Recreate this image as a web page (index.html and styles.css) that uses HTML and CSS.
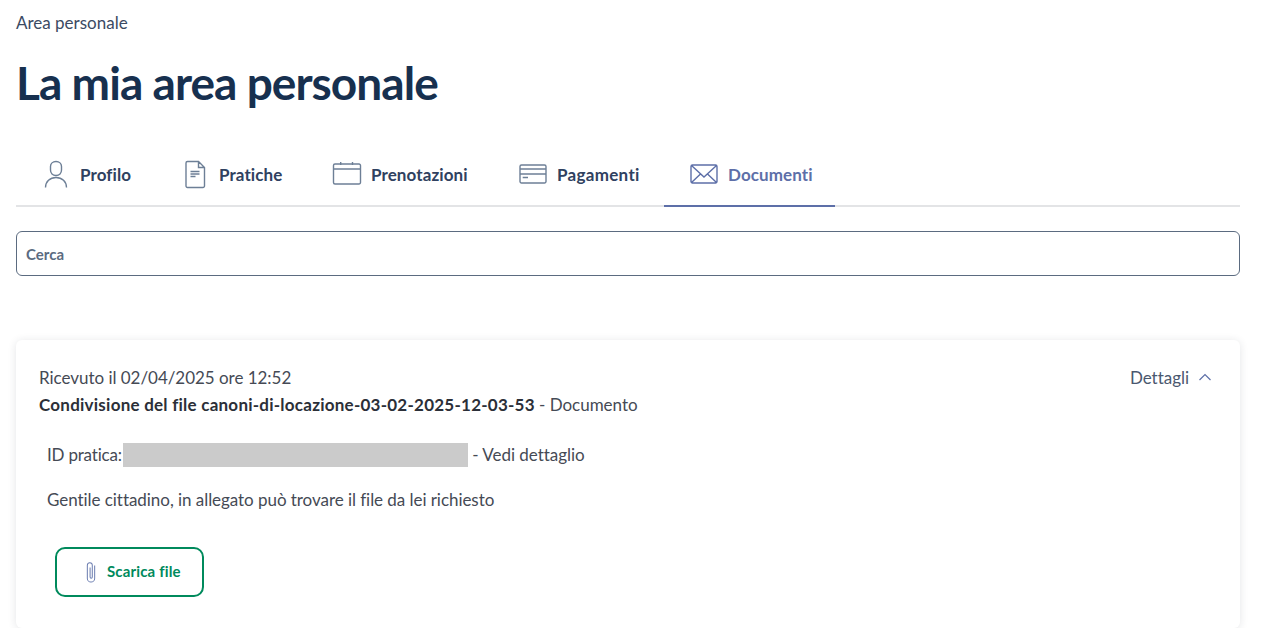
FILE: index.html
```html
<!DOCTYPE html>
<html lang="it">
<head>
<meta charset="utf-8">
<title>La mia area personale</title>
<link rel="stylesheet" href="styles.css">
</head>
<body>
<main class="page">
  <nav class="crumb">Area personale</nav>
  <h1 class="title">La mia area personale</h1>
  <ul class="tabs">
    <li class="tab"><svg class="ico" viewBox="0 0 32 32"><path d="M16 3.500c-3.300 0-5.500 2.200-5.500 5v3.500c0 3.200 2.200 5.500 5.500 5.500s5.500-2.300 5.500-5.500V8.500c0-2.800-2.200-5-5.500-5zM5.500 29.500c0-6 4.500-10 10.500-10s10.500 4 10.500 10"/></svg><span class="tab-t t1">Profilo</span></li>
    <li class="tab"><svg class="ico" viewBox="0 0 32 32"><path d="M8.500 3.500h11l6 6v18.500a1.500 1.500 0 0 1-1.500 1.500H8.500A1.500 1.500 0 0 1 7 28V5a1.500 1.500 0 0 1 1.500-1.500zM19.500 4v5.500H25M11.500 13.500h9M11.500 16h9M11.500 18.500h5"/></svg><span class="tab-t t2">Pratiche</span></li>
    <li class="tab"><svg class="ico" viewBox="0 0 32 32"><path d="M4 6h24a1.500 1.500 0 0 1 1.500 1.500v17a1.500 1.500 0 0 1-1.500 1.500H4a1.500 1.500 0 0 1-1.500-1.500v-17A1.500 1.500 0 0 1 4 6zM3 11h26M9.700 4v3M21.500 4v3"/></svg><span class="tab-t t3">Prenotazioni</span></li>
    <li class="tab"><svg class="ico" viewBox="0 0 32 32"><path d="M4.500 7h23a1.500 1.500 0 0 1 1.500 1.500v15a1.500 1.500 0 0 1-1.500 1.500h-23A1.500 1.500 0 0 1 3 23.500v-15A1.500 1.500 0 0 1 4.500 7zM3 11h26M3 16h26M5.700 19.500H11"/></svg><span class="tab-t t4">Pagamenti</span></li>
    <li class="tab active"><svg class="ico" viewBox="0 0 32 32"><path d="M4.500 7h23a1.500 1.500 0 0 1 1.500 1.500v15a1.500 1.500 0 0 1-1.500 1.500h-23A1.500 1.500 0 0 1 3 23.500v-15A1.500 1.500 0 0 1 4.500 7zM3.500 7.500l12.500 11.500 12.500-11.500M3.500 24.500l9-8.500M28.500 24.500l-9-8.500"/></svg><span class="tab-t t5">Documenti</span></li>
  </ul>
  <div class="search"><span class="search-label">Cerca</span></div>
  <section class="card">
    <div class="card-head">
      <div>
        <p class="line">Ricevuto il 02/04/2025 ore 12:52</p>
        <p class="line"><strong>Condivisione del file canoni-di-locazione-03-02-2025-12-03-53</strong> - Documento</p>
      </div>
      <div class="toggle">Dettagli <svg class="chev" viewBox="0 0 14 14"><path d="M1.500 10L7 4.500 12.500 10"/></svg></div>
    </div>
    <div class="card-body">
      <p class="id-row"><span class="id-label">ID pratica:</span><span class="redact"></span> - Vedi dettaglio</p>
      <p class="msg">Gentile cittadino, in allegato può trovare il file da lei richiesto</p>
      <a class="btn"><svg class="clip" viewBox="0 0 24 24"><path d="M11 7v10.500a1.200 1.200 0 0 0 2.400 0V4.500a2.700 2.700 0 0 0-5.400 0v14.500a4 4 0 0 0 8 0V5"/></svg><span class="btn-t">Scarica file</span></a>
    </div>
  </section>
</main>
</body>
</html>
```
FILE: styles.css
```css
* { box-sizing: border-box; }
html, body { margin: 0; padding: 0; background: #fff; }
body { font-family: "Lato", "Liberation Sans", sans-serif; color: #333d4d; overflow: hidden; }
.page { width: 1240px; padding: 12px 0 0 16px; }
.crumb { font-size: 17px; line-height: 22px; color: #3b4a63; }
.title { margin: 23px 0 0; font-size: 46px; line-height: 52px; font-weight: 700; color: #17304f; letter-spacing: -0.95px; }
.tabs { list-style: none; margin: 41px 0 0; padding: 0; display: flex; border-bottom: 2px solid #e3e4e6; height: 57px; }
.tab { display: flex; align-items: center; gap: 8px; padding: 0 24px 7px; margin-bottom: -2px; border-bottom: 2px solid transparent; font-size: 17px; letter-spacing: .1px; font-weight: 700; color: #2f4160; }
.tab-t { white-space: nowrap; }
.t1 { width: 51px; }
.t2 { width: 64px; }
.t3 { width: 98px; }
.t4 { width: 83px; letter-spacing: .3px; }
.t5 { width: 83px; }
.ico { width: 32px; height: 32px; fill: none; stroke: #6d7f96; stroke-width: 1.400; flex: none; }
.active { color: #5d6fa8; border-bottom-color: #5d6fa8; }
.active .ico { stroke: #5d6fa8; }
.search { margin-top: 24px; height: 45px; border: 1px solid #5b6b80; border-radius: 6px; display: flex; align-items: center; padding: 1px 9px 0; }
.search-label { font-size: 15px; font-weight: 700; color: #5b6b80; }
.card { margin-top: 64px; height: 288px; border-radius: 6px; background: #fff; box-shadow: 0 1px 8px rgba(30,40,60,.12); padding: 24px 24px 0 23px; font-size: 17px; letter-spacing: -.03px; color: #454a55; }
.card-head { display: flex; justify-content: space-between; }
.line { margin: 0; line-height: 27px; }
.line strong { color: #2b2f38; letter-spacing: .24px; }
.toggle { display: flex; align-items: center; gap: 9px; height: 22px; margin-top: 2px; padding-right: 4px; color: #4a586f; }
.chev { width: 14px; height: 14px; fill: none; stroke: #5d6fa8; stroke-width: 1.200; }
.card-body { padding: 25px 0 0 8px; }
.id-row { margin: 0; display: flex; align-items: flex-start; height: 24px; line-height: 23px; white-space: pre; }
.id-label { width: 76px; letter-spacing: -.2px; }
.redact { width: 345px; height: 24px; background: #cbcbcb; }
.msg { margin: 21px 0 0; line-height: 24px; letter-spacing: -.05px; }
.btn { display: flex; align-items: center; width: 149px; height: 50px; margin: 35px 0 0 8px; padding-left: 23px; gap: 5px; border: 2px solid #008a5c; border-radius: 10px; color: #008a5c; font-size: 15px; letter-spacing: .15px; font-weight: 700; }
.btn-t { line-height: 20px; margin-top: -2px; }
.clip { width: 22px; height: 22px; fill: none; stroke: #6b7db0; stroke-width: 1.100; }
```
